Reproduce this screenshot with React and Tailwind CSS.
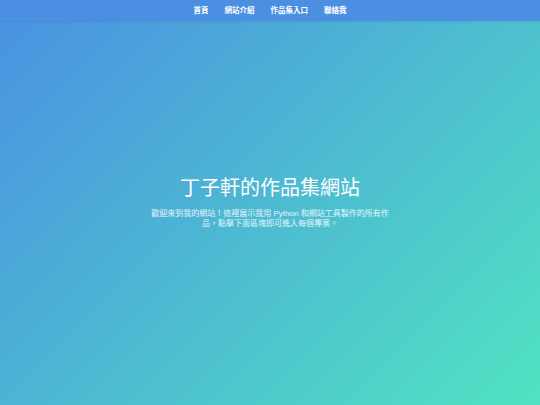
import React from 'react'

const links = ['首頁', '網站介紹', '作品集入口', '聯絡我']

const App = () => {
  return (
    <div
      className="relative min-h-screen w-full bg-[linear-gradient(135deg,#4a90e2,#50e3c2)] text-white"
      style={{ fontFamily: '"Liberation Sans", "Noto Sans CJK TC", sans-serif' }}
    >
      <nav className="absolute top-0 left-0 right-0 h-[21px] bg-[#4a8fe2] shadow-[0_1px_2px_rgba(0,0,0,0.08)] flex items-center justify-center gap-[16px]">
        {links.map(l => (
          <a key={l} href="#" className="text-[7.5px] font-bold text-white leading-none">
            {l}
          </a>
        ))}
      </nav>

      <section className="min-h-screen flex flex-col items-center justify-center text-center px-4">
        <h1 className="text-[20px] leading-[24px] font-normal mb-[9px]">丁子軒的作品集網站</h1>
        <p className="max-w-[246px] text-[8px] leading-[10px] text-white/85">
          歡迎來到我的網站！這裡展示我用 Python 和網站工具製作的所有作品，點擊下面區塊即可進入每個專案。
        </p>
      </section>
    </div>
  )
}

export default App
